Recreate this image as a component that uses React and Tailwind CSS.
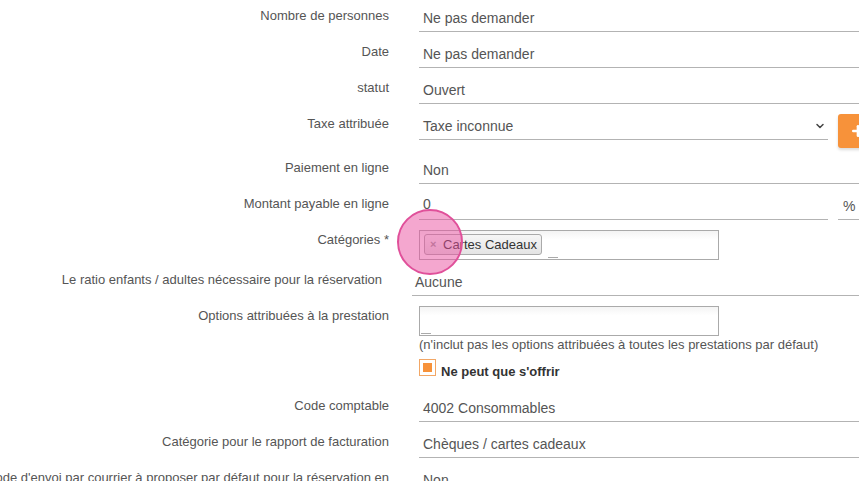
import React from 'react';
import { ChevronDown, Plus } from 'lucide-react';

const Label = ({ children, className = 'w-[389px] pt-[6px]' }) => (
  <div className={`${className} shrink-0 flex justify-end whitespace-nowrap text-[13px] leading-5 text-[#555]`}>
    {children}
  </div>
);

const Field = ({ children, className = '' }) => (
  <div className={`h-[32px] border-b border-[#b3b3b3] pl-1 pt-[8px] text-[14px] leading-5 text-[#555] ${className}`}>
    {children}
  </div>
);

const TextRow = ({ label, value }) => (
  <div className="flex mb-[4px]">
    <Label>{label}</Label>
    <div className="ml-[30px] flex-1 min-w-0">
      <Field>{value}</Field>
    </div>
  </div>
);

const App = () => {
  return (
    <div className="relative w-[859px] h-[481px] overflow-hidden bg-white font-['Liberation_Sans',Arial,sans-serif]">
      <TextRow label="Nombre de personnes" value="Ne pas demander" />
      <TextRow label="Date" value="Ne pas demander" />
      <TextRow label="statut" value="Ouvert" />

      {/* Taxe + bouton ajouter */}
      <div className="flex mb-[4px]">
        <Label>Taxe attribuée</Label>
        <div className="ml-[30px] flex items-start">
          <Field className="w-[409px] flex items-start justify-between pr-[2px]">
            <span>Taxe inconnue</span>
            <ChevronDown className="w-3 h-3 mt-1 text-[#444]" strokeWidth={3} />
          </Field>
          <div className="ml-[10px] mt-[6px] w-[40px] h-[34px] shrink-0 rounded-[3px] bg-[#f7923a] shadow-[0_2px_3px_rgba(0,0,0,0.15)] flex items-center justify-center">
            <Plus className="w-4 h-4 text-white" strokeWidth={4} />
          </div>
        </div>
      </div>

      <TextRow label="Paiement en ligne" value="Non" />

      <div className="flex mb-[4px]">
        <Label>Montant payable en ligne</Label>
        <div className="ml-[30px] flex flex-1">
          <Field className="w-[409px] !pt-[6px]">0</Field>
          <Field className="ml-[10px] flex-1 !pl-[5px]">%</Field>
        </div>
      </div>

      {/* Catégories */}
      <div className="flex">
        <Label className="w-[389px] pt-[6px]">Catégories *</Label>
        <div className="ml-[30px] flex-1">
          <div className="mt-[6px] mb-[4px] w-[300px] h-[30px] border border-[#aaa] bg-gradient-to-b from-[#f4f4f4] to-white to-[30%] flex items-start pl-[4px] pt-[3px]">
            <span className="relative h-[21px] rounded-[3px] border border-[#aaa] bg-gradient-to-b from-[#f6f6f6] to-[#e4e4e4] pl-[18px] pr-[4px] text-[13px] leading-[19px] text-[#333]">
              <span className="absolute left-[5px] top-0 text-[11px] font-bold text-[#999]">×</span>
              Cartes Cadeaux
            </span>
            <span className="ml-[6px] mt-[23px] w-[10px] border-b border-[#aaa]" />
          </div>
        </div>
      </div>

      <div className="flex mb-[4px]">
        <Label className="w-[382px] pt-[6px]">Le ratio enfants / adultes nécessaire pour la réservation</Label>
        <div className="ml-[30px] flex-1">
          <Field className="!pl-[3px]">Aucune</Field>
        </div>
      </div>

      {/* Options */}
      <div className="flex h-[90px]">
        <Label>Options attribuées à la prestation</Label>
        <div className="ml-[30px] flex-1">
          <div className="mt-[6px] w-[300px] h-[30px] border border-[#aaa] bg-gradient-to-b from-[#f4f4f4] to-white to-[30%] flex items-end pl-[1px]">
            <span className="w-[10px] border-b border-[#aaa] mb-[1px]" />
          </div>
          <div className="text-[13px] leading-[18px] text-[#555]">
            (n'inclut pas les options attribuées à toutes les prestations par défaut)
          </div>
          <div className="mt-[5px] flex items-start">
            <span className="w-[17px] h-[17px] border border-[#f2a766] bg-white flex items-center justify-center">
              <span className="w-[9px] h-[9px] bg-[#f7923a]" />
            </span>
            <span className="ml-[5px] pt-[4px] text-[13px] leading-[18px] font-bold text-[#333]">Ne peut que s'offrir</span>
          </div>
        </div>
      </div>

      <TextRow label="Code comptable" value="4002 Consommables" />
      <TextRow label="Catégorie pour le rapport de facturation" value="Chèques / cartes cadeaux" />
      <TextRow label="Mode d'envoi par courrier à proposer par défaut pour la réservation en" value="Non" />

      {/* curseur */}
      <div className="absolute left-[397px] top-[209px] w-[66px] h-[66px] rounded-full border-2 border-[#e0509a] bg-[rgba(233,80,160,0.5)]" />
    </div>
  );
};

export default App;
